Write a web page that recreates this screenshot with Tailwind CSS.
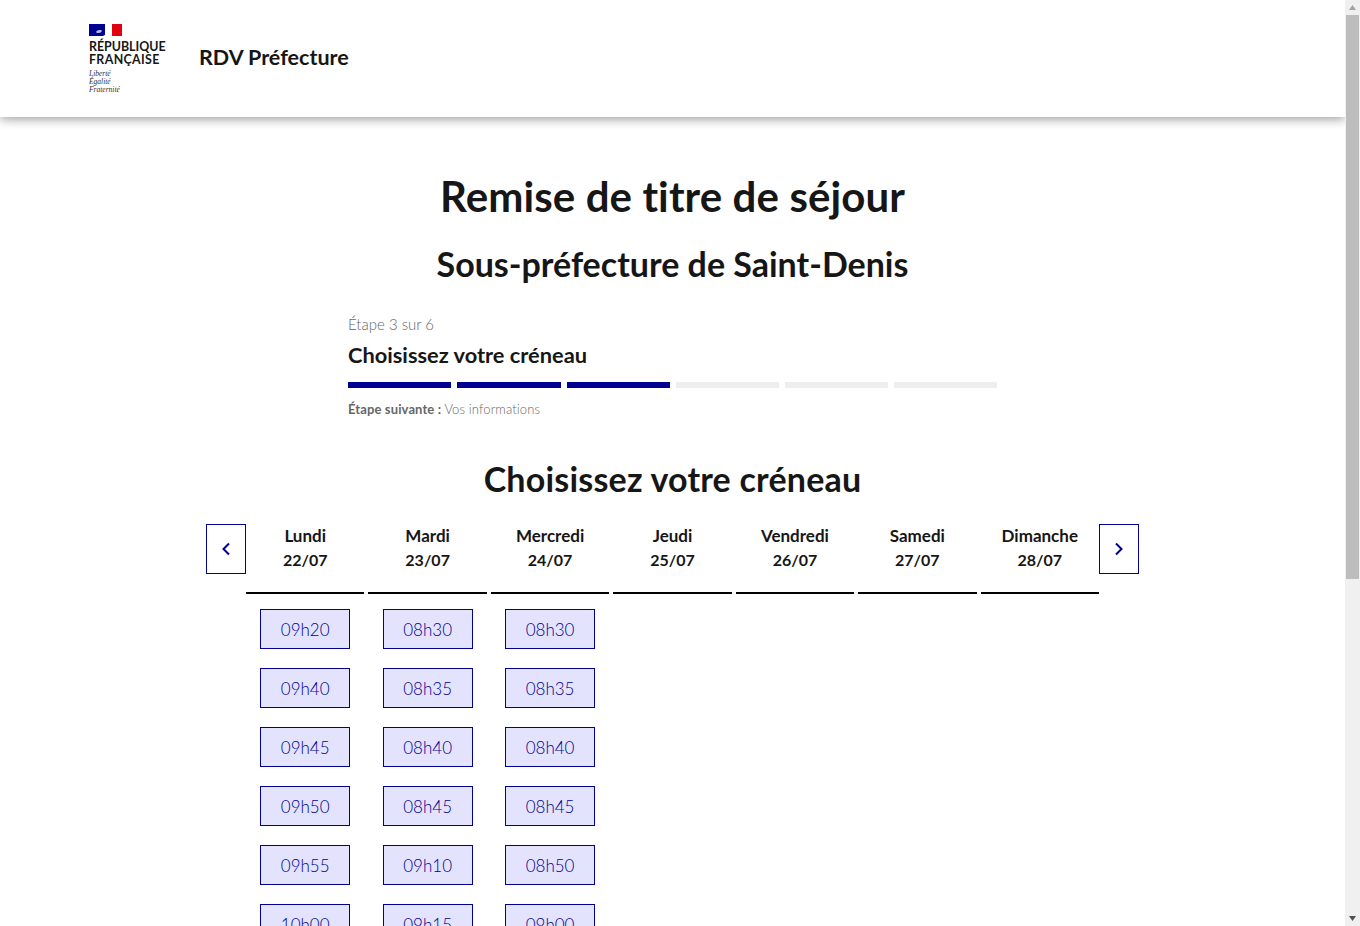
<!DOCTYPE html>
<html lang="fr">
<head>
  <meta charset="UTF-8" />
  <title>RDV Préfecture</title>
  <script src="https://cdn.jsdelivr.net/npm/@tailwindcss/browser@4"></script>
</head>
<body class="h-[926px] overflow-hidden bg-white font-['Lato',sans-serif] text-[#161616]">
  <div class="flex h-[926px]">
    <div class="w-[1345px] h-[926px] overflow-hidden">
      <!-- header -->
      <header class="relative flex items-start h-[117px] pl-[89px] bg-white shadow-[0_2px_10px_rgba(0,0,0,0.4)]">
        <div class="w-[110px] mt-[24px]">
          <svg width="33" height="12" viewBox="0 0 33 12" class="block">
            <rect width="33" height="12" fill="#fff"/>
            <rect width="16" height="12" fill="#000091"/>
            <rect x="23" width="10" height="12" fill="#e1000f"/>
            <path d="M19 0h4c-1 2 0 4 0 6s0 4-2 6h-7c2-1 3-2 3-3 0-2 1-3 1-4s0-3 1-5z" fill="#fff"/>
            <path d="M7 8c1-2 3-2 5-2l1 1c-1 2-3 2-5 2z" fill="#b9b9dd"/>
          </svg>
          <div class="mt-[4px] text-[12.4px] leading-[13px] font-bold">RÉPUBLIQUE<br><span class="tracking-[0.35px]">FRANÇAISE</span></div>
          <div class="mt-[4px] font-['Liberation_Serif',serif] italic text-[7.5px] leading-[8px] text-[#333]">Liberté<br>Égalité<br>Fraternité</div>
        </div>
        <div class="mt-[42px] text-[21.5px] leading-[30px] font-bold">RDV Préfecture</div>
      </header>

      <h1 class="mt-[55px] text-center text-[42px] leading-[48px] font-bold tracking-[0.1px]">Remise de titre de séjour</h1>
      <h2 class="mt-[24px] text-center text-[34px] leading-[40px] font-bold">Sous-préfecture de Saint-Denis</h2>

      <!-- stepper -->
      <div class="w-[649px] ml-[348px] mt-[28px]">
        <div class="text-[15px] leading-[24px] font-light text-[#666]">Étape 3 sur 6</div>
        <div class="mt-[5px] text-[21.8px] leading-[28px] font-bold">Choisissez votre créneau</div>
        <div class="mt-[13px] ml-[0.3px] grid grid-cols-6 gap-[6px] h-[6px]">
          <div class="bg-[#000091]"></div>
          <div class="bg-[#000091]"></div>
          <div class="bg-[#000091]"></div>
          <div class="bg-[#eeeeee]"></div>
          <div class="bg-[#eeeeee]"></div>
          <div class="bg-[#eeeeee]"></div>
        </div>
        <div class="mt-[11px] text-[13px] leading-[20px] font-light text-[#666] tracking-[0.12px]"><span class="font-bold">Étape suivante :</span> Vos informations</div>
      </div>

      <h2 class="mt-[40px] text-center text-[34px] leading-[40px] font-bold tracking-[0.2px]">Choisissez votre créneau</h2>

      <!-- calendar -->
      <div class="flex items-start ml-[206px] mt-[25px] w-[933px]">
        <button class="flex items-center justify-center w-[40px] h-[50px] border border-[#000091] text-[#000091]">
          <svg width="10" height="14" viewBox="0 0 10 14" fill="none" stroke="#000091" stroke-width="2"><path d="M8 1.5 2.5 7 8 12.5"/></svg>
        </button>
        <div class="grid grid-cols-7 gap-x-[4px] w-[853px]">
          <div class="flex flex-col items-center">
            <div class="w-full h-[70px] border-b-2 border-black text-center text-[17px] leading-[24px] font-bold">Lundi<br><span class="text-[16px]">22/07</span></div>
            <button class="mt-[15px] pt-[2px] w-[90px] h-[40px] border border-[#000091] bg-[#e3e3fd] text-[#000091] text-[17px] font-light">09h20</button>
            <button class="mt-[19px] pt-[2px] w-[90px] h-[40px] border border-[#000091] bg-[#e3e3fd] text-[#000091] text-[17px] font-light">09h40</button>
            <button class="mt-[19px] pt-[2px] w-[90px] h-[40px] border border-[#000091] bg-[#e3e3fd] text-[#000091] text-[17px] font-light">09h45</button>
            <button class="mt-[19px] pt-[2px] w-[90px] h-[40px] border border-[#000091] bg-[#e3e3fd] text-[#000091] text-[17px] font-light">09h50</button>
            <button class="mt-[19px] pt-[2px] w-[90px] h-[40px] border border-[#000091] bg-[#e3e3fd] text-[#000091] text-[17px] font-light">09h55</button>
            <button class="mt-[19px] pt-[2px] w-[90px] h-[40px] border border-[#000091] bg-[#e3e3fd] text-[#000091] text-[17px] font-light">10h00</button>
          </div>
          <div class="flex flex-col items-center">
            <div class="w-full h-[70px] border-b-2 border-black text-center text-[17px] leading-[24px] font-bold">Mardi<br><span class="text-[16px]">23/07</span></div>
            <button class="mt-[15px] pt-[2px] w-[90px] h-[40px] border border-[#000091] bg-[#e3e3fd] text-[#000091] text-[17px] font-light">08h30</button>
            <button class="mt-[19px] pt-[2px] w-[90px] h-[40px] border border-[#000091] bg-[#e3e3fd] text-[#000091] text-[17px] font-light">08h35</button>
            <button class="mt-[19px] pt-[2px] w-[90px] h-[40px] border border-[#000091] bg-[#e3e3fd] text-[#000091] text-[17px] font-light">08h40</button>
            <button class="mt-[19px] pt-[2px] w-[90px] h-[40px] border border-[#000091] bg-[#e3e3fd] text-[#000091] text-[17px] font-light">08h45</button>
            <button class="mt-[19px] pt-[2px] w-[90px] h-[40px] border border-[#000091] bg-[#e3e3fd] text-[#000091] text-[17px] font-light">09h10</button>
            <button class="mt-[19px] pt-[2px] w-[90px] h-[40px] border border-[#000091] bg-[#e3e3fd] text-[#000091] text-[17px] font-light">09h15</button>
          </div>
          <div class="flex flex-col items-center">
            <div class="w-full h-[70px] border-b-2 border-black text-center text-[17px] leading-[24px] font-bold">Mercredi<br><span class="text-[16px]">24/07</span></div>
            <button class="mt-[15px] pt-[2px] w-[90px] h-[40px] border border-[#000091] bg-[#e3e3fd] text-[#000091] text-[17px] font-light">08h30</button>
            <button class="mt-[19px] pt-[2px] w-[90px] h-[40px] border border-[#000091] bg-[#e3e3fd] text-[#000091] text-[17px] font-light">08h35</button>
            <button class="mt-[19px] pt-[2px] w-[90px] h-[40px] border border-[#000091] bg-[#e3e3fd] text-[#000091] text-[17px] font-light">08h40</button>
            <button class="mt-[19px] pt-[2px] w-[90px] h-[40px] border border-[#000091] bg-[#e3e3fd] text-[#000091] text-[17px] font-light">08h45</button>
            <button class="mt-[19px] pt-[2px] w-[90px] h-[40px] border border-[#000091] bg-[#e3e3fd] text-[#000091] text-[17px] font-light">08h50</button>
            <button class="mt-[19px] pt-[2px] w-[90px] h-[40px] border border-[#000091] bg-[#e3e3fd] text-[#000091] text-[17px] font-light">09h00</button>
          </div>
          <div class="h-[70px] border-b-2 border-black text-center text-[17px] leading-[24px] font-bold">Jeudi<br><span class="text-[16px]">25/07</span></div>
          <div class="h-[70px] border-b-2 border-black text-center text-[17px] leading-[24px] font-bold">Vendredi<br><span class="text-[16px]">26/07</span></div>
          <div class="h-[70px] border-b-2 border-black text-center text-[17px] leading-[24px] font-bold">Samedi<br><span class="text-[16px]">27/07</span></div>
          <div class="h-[70px] border-b-2 border-black text-center text-[17px] leading-[24px] font-bold">Dimanche<br><span class="text-[16px]">28/07</span></div>
        </div>
        <button class="flex items-center justify-center w-[40px] h-[50px] border border-[#000091]">
          <svg width="10" height="14" viewBox="0 0 10 14" fill="none" stroke="#000091" stroke-width="2"><path d="M2 1.5 7.5 7 2 12.5"/></svg>
        </button>
      </div>
    </div>

    <!-- scrollbar -->
    <div class="flex flex-col items-center w-[15px] h-[926px] bg-[#f0f0f0]">
      <svg width="15" height="15" viewBox="0 0 15 15" class="shrink-0"><path d="M4 10h7L7.5 5z" fill="#a3a3a3"/></svg>
      <div class="w-[13px] h-[564px] bg-[#bdbdbd]"></div>
      <svg width="15" height="15" viewBox="0 0 15 15" class="shrink-0 mt-auto"><path d="M4 5h7L7.5 10z" fill="#505050"/></svg>
    </div>
  </div>
</body>
</html>
